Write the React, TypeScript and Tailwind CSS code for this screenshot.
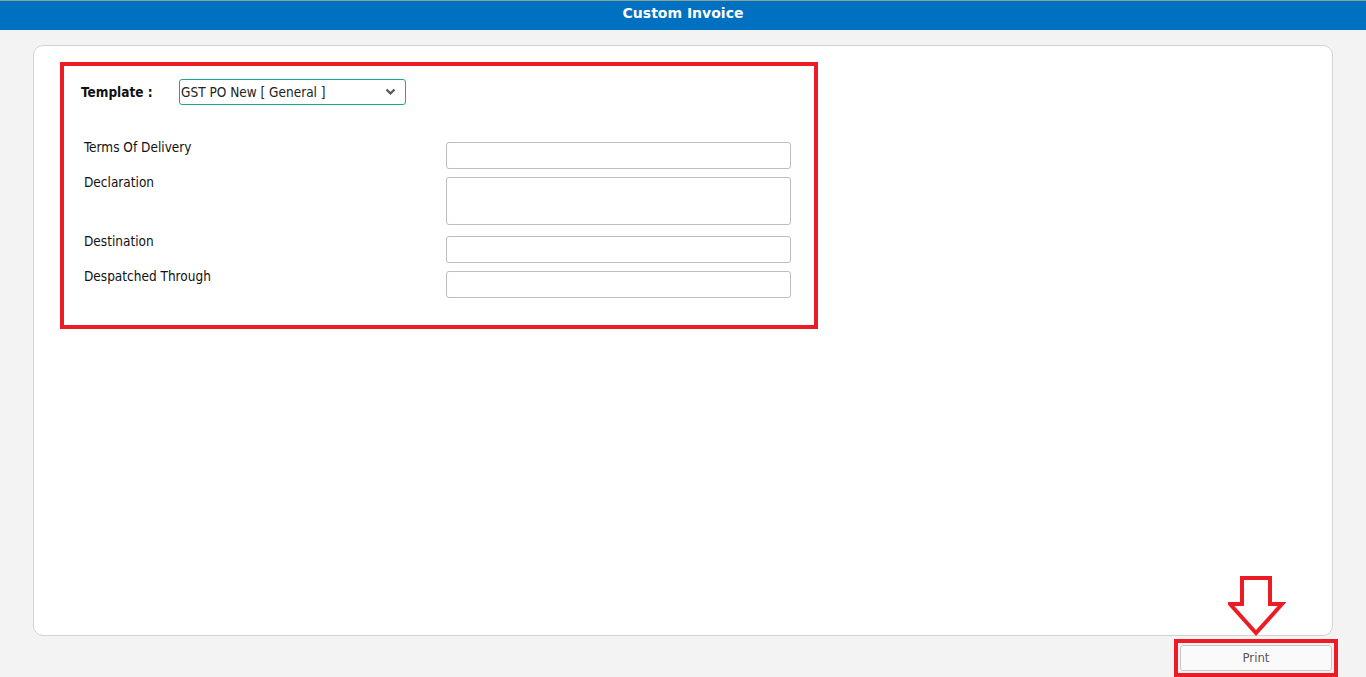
import React from "react";

const font = { fontFamily: '"DejaVu Sans Condensed", "DejaVu Sans", Tahoma, sans-serif' };

function Field({ label, tall, mt }: { label: string; tall?: boolean; mt: string }) {
  return (
    <div className={`flex items-start ${mt}`}>
      <div className="w-[382px] pl-[20px] -mt-[3px] text-[13.5px] leading-[16px] text-[#111]">{label}</div>
      <div
        className={`w-[345px] ${tall ? "h-[48px]" : "h-[27px]"} border border-[#bdbdbd] rounded-[3px] bg-white`}
      />
    </div>
  );
}

export default function App() {
  return (
    <div className="w-[1366px] h-[677px] bg-[#f3f3f3] relative overflow-hidden" style={font}>
      <div className="h-[30px] bg-[#0070c0] border-t border-[#8aa39a] flex items-center justify-center">
        <span
          className="text-white font-bold text-[14px] leading-none -mt-[6px]"
          style={{ fontFamily: '"DejaVu Sans", Verdana, sans-serif' }}
        >
          Custom Invoice
        </span>
      </div>
      <div className="pl-[33px] pt-[15px]">
        <div className="w-[1300px] h-[591px] bg-white border border-[#d3d3d3] rounded-[10px] pl-[26px] pt-[16px]">
          <div className="w-[758px] h-[267px] border-[4px] border-[#ed1c24] pt-[13px] pl-[17px]">
            <div className="flex items-center">
              <span className="w-[98px] font-bold text-[13.5px] text-[#111]">Template :</span>
              <div className="w-[227px] h-[26px] border border-[#1aaa8a] rounded-[3px] flex items-center justify-between pl-[1px] pr-[9px]">
                <span className="text-[13.5px] text-[#222]">GST PO New [ General ]</span>
                <svg width="11" height="8" viewBox="0 0 11 8">
                  <path d="M1.5 1.5 L5.5 5.5 L9.5 1.5" stroke="#555" strokeWidth="2.2" fill="none" />
                </svg>
              </div>
            </div>
            <div className="-ml-[17px]">
              <Field label="Terms Of Delivery" mt="mt-[37px]" />
              <Field label="Declaration" tall mt="mt-[8px]" />
              <Field label="Destination" mt="mt-[11px]" />
              <Field label="Despatched Through" mt="mt-[8px]" />
            </div>
          </div>
        </div>
        <div className="flex justify-end w-[1305px] mt-[3px]">
          <div className="border-[4px] border-[#ed1c24] p-[2px]">
            <button className="w-[152px] h-[26px] border border-[#c8c8c8] rounded-[3px] bg-[#fafafa] text-[13px] text-[#555] flex items-center justify-center">
              Print
            </button>
          </div>
        </div>
      </div>
      <svg className="absolute left-[1228px] top-[575px]" width="58" height="62" viewBox="0 0 58 62">
        <path
          d="M14 3 L42 3 L42 29 L54 29 L28 58 L2 29 L14 29 Z"
          fill="white"
          stroke="#ed1c24"
          strokeWidth="4"
          strokeLinejoin="miter"
        />
      </svg>
    </div>
  );
}
